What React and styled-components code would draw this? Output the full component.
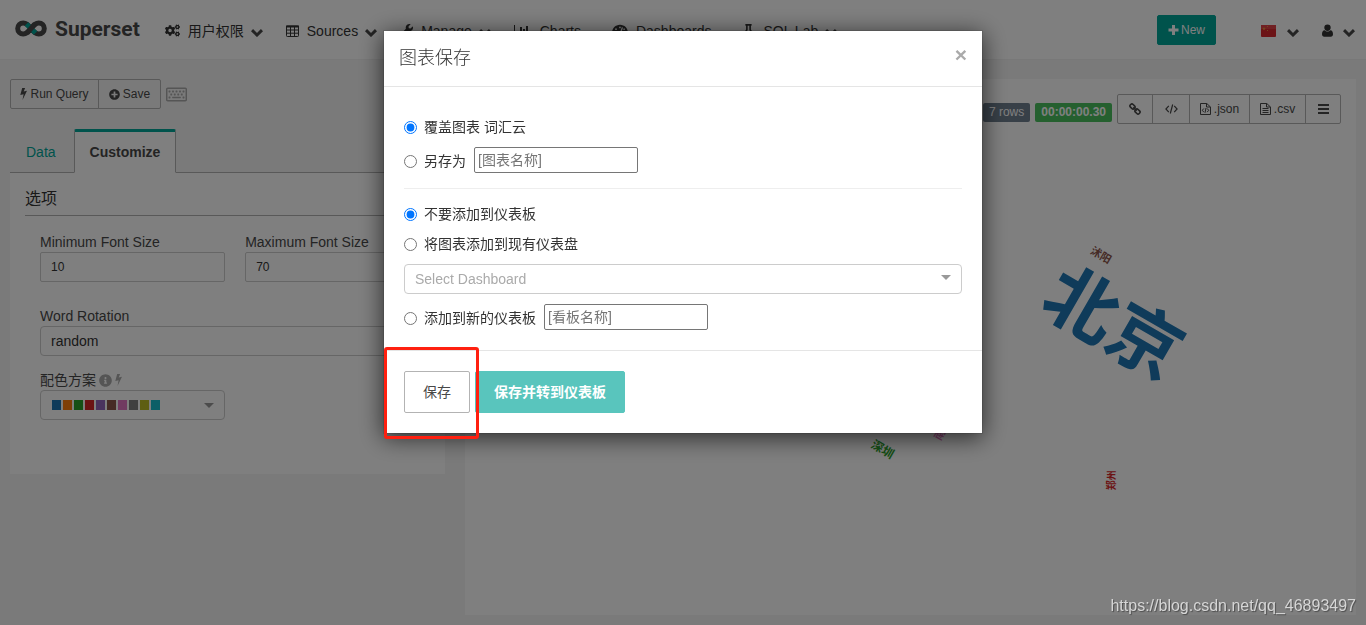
import React from 'react';
import styled, { createGlobalStyle, css } from 'styled-components';
import {
  FaCogs, FaWrench, FaTachometerAlt, FaFlask, FaPlusCircle, FaRegKeyboard, FaInfoCircle,
} from 'react-icons/fa';

const Global = createGlobalStyle`
  *, *::before, *::after { box-sizing: border-box; }
  body {
    margin: 0;
    background: #f5f5f5;
    color: #333;
    font: 14px/20px "Liberation Sans", Arial, "Noto Sans CJK SC", sans-serif;
  }
  button, input, select { font: inherit; color: inherit; }
  button { cursor: pointer; }
`;

const Page = styled.div`
  min-height: 100vh;
  display: flex;
  flex-direction: column;
`;

const Navbar = styled.header`
  display: flex;
  align-items: center;
  justify-content: space-between;
  height: 60px;
  padding: 0 11px 0 15px;
  background: #fff;
  border-bottom: 1px solid #f0f0f0;
`;

const NavGroup = styled.nav`
  display: flex;
  align-items: center;
`;

const Brand = styled.a`
  display: flex;
  align-items: center;
  gap: 8px;
  margin-right: 25px;
  padding-bottom: 2px;
  color: #484848;
  font: 700 21px/24px Roboto, sans-serif;
  text-decoration: none;
`;

const NavLink = styled.a`
  display: flex;
  align-items: center;
  height: 60px;
  padding-top: 2px;
  margin-right: ${(p) => (p.$menu ? 23 : 31)}px;
  color: #333;
  white-space: nowrap;
  text-decoration: none;
  > span { margin: 0 7px 0 8px; }
  > span:last-child { margin-right: 0; }
  > svg:last-child { margin-top: 4px; }
`;

const Tools = styled.div`
  display: flex;
  align-items: center;
`;

const NewButton = styled.button`
  display: flex;
  align-items: center;
  gap: 2px;
  height: 30px;
  padding: 0 10px;
  margin-right: 45px;
  border: 1px solid #00a699;
  border-radius: 2px;
  background: #00a699;
  color: #fff;
  font-size: 12px;
`;

const ToolLink = styled.a`
  display: flex;
  align-items: center;
  gap: ${(p) => p.$gap}px;
  padding-top: 2px;
  & + & { margin-left: 23px; }
  color: #333;
  > svg:last-child { margin-top: 4px; }
`;

const Main = styled.main`
  flex: 1;
  display: grid;
  grid-template-columns: 1fr 2fr;
  padding: 19px 0 10px;
`;

const Column = styled.section`
  display: flex;
  flex-direction: column;
  min-width: 0;
  padding: 0 10px;
`;

const ButtonBar = styled.div`
  display: flex;
  align-items: center;
`;

const SmallButton = styled.button`
  display: flex;
  align-items: center;
  justify-content: center;
  gap: 3px;
  height: 30px;
  min-width: ${(p) => p.$min || 0}px;
  padding: 0 9px;
  margin: 0 0 0 -1px;
  border: 1px solid #b3b3b3;
  background: transparent;
  color: #484848;
  font-size: 12px;
  &:first-of-type { margin-left: 0; border-radius: 2px 0 0 2px; }
  &:last-of-type { border-radius: 0 2px 2px 0; }
`;

const KeyboardIcon = styled(FaRegKeyboard)`
  margin-left: 5px;
  color: #aaa;
`;

const Tabs = styled.div`
  display: flex;
  gap: 2px;
  margin-top: 20px;
  border-bottom: 1px solid #b3b3b3;
`;

const Tab = styled.button`
  height: 44px;
  margin-bottom: -1px;
  padding: 1px 15px 0;
  border: 1px solid transparent;
  background: none;
  color: #00a699;
  ${(p) => p.$active && css`
    padding-top: 0;
    border: 1px solid #b3b3b3;
    border-top: 3px solid #00a699;
    border-bottom-color: #fff;
    border-radius: 2px 2px 0 0;
    background: #fff;
    color: #484848;
    font-weight: 700;
  `}
`;

const Panel = styled.div`
  padding: 15px 15px 54px;
  background: #fff;
`;

const PanelTitle = styled.h2`
  margin: 0 0 16px;
  padding-bottom: 6px;
  border-bottom: 1px solid #b3b3b3;
  font-size: 16px;
  line-height: 21px;
  font-weight: 400;
`;

const Fields = styled.div`
  display: grid;
  grid-template-columns: 1fr 1fr;
  column-gap: 20px;
  padding-left: 15px;
`;

const Field = styled.div`
  display: flex;
  flex-direction: column;
  grid-column: ${(p) => (p.$wide ? '1 / -1' : 'auto')};
  margin-bottom: ${(p) => p.$after || 0}px;
  > label { display: flex; align-items: center; gap: 3px; color: #484848; }
  > label svg { color: #aaa; }
`;

const TextBox = styled.input`
  width: 100%;
  height: 30px;
  padding: 0 10px;
  border: 1px solid #ccc;
  border-radius: 2px;
  background: #fff;
  font-size: 12px;
`;

const SelectBox = styled.select`
  appearance: none;
  width: 100%;
  height: 30px;
  padding: 0 10px;
  border: 1px solid #ccc;
  border-radius: 4px;
  background: #fff;
  color: ${(p) => (p.$empty ? '#aaa' : '#333')};
`;

const SchemeButton = styled.button`
  display: flex;
  align-items: center;
  gap: 2px;
  height: 30px;
  padding: 0 10px 0 11px;
  border: 1px solid #ccc;
  border-radius: 4px;
  background: #fff;
  > svg { margin-left: auto; }
`;

const Swatch = styled.span`
  width: 9px;
  height: 10px;
  background: ${(p) => p.$color};
`;

const ChartCard = styled.div`
  flex: 1;
  display: flex;
  flex-direction: column;
  padding: 15px;
  background: #fff;
`;

const ChartHeader = styled.div`
  display: flex;
  justify-content: flex-end;
  align-items: center;
  gap: 5px;
`;

const Badge = styled.span`
  margin-top: 6px;
  padding: 0 6px;
  border-radius: 2px;
  background: ${(p) => p.$bg};
  color: #fff;
  font-size: 12px;
  line-height: 19px;
  font-weight: ${(p) => (p.$bold ? 700 : 400)};
`;

const Cloud = styled.svg`
  flex: 1;
  width: 100%;
  min-height: 400px;
  font-family: "Noto Sans CJK SC", sans-serif;
  font-weight: 700;
`;

const Overlay = styled.div`
  position: fixed;
  inset: 0;
  padding: 30px 10px;
  background: rgba(0, 0, 0, 0.5);
`;

const Modal = styled.form`
  max-width: 600px;
  margin: 0 auto;
  border: 1px solid rgba(0, 0, 0, 0.1);
  background: #fff;
  background-clip: padding-box;
  box-shadow: 0 4px 22px rgba(0, 0, 0, 0.65);
`;

const ModalHeader = styled.div`
  display: flex;
  justify-content: space-between;
  align-items: flex-start;
  height: 56px;
  padding: 14px 15px;
  border-bottom: 1px solid #e5e5e5;
`;

const ModalTitle = styled.h1`
  margin: 0;
  font-size: 18px;
  line-height: 27px;
  font-weight: 300;
`;

const CloseButton = styled.button`
  padding: 0;
  border: 0;
  background: none;
  color: #aaa;
  font-size: 21px;
  line-height: 20px;
  font-weight: 700;
`;

const ModalBody = styled.div`
  display: flex;
  flex-direction: column;
  padding: 30px 20px 20px;
`;

const Option = styled.div`
  display: flex;
  align-items: center;
  height: ${(p) => (p.$input ? 26 : 20)}px;
  margin-bottom: ${(p) => p.$after || 0}px;
  > label {
    display: flex;
    align-items: center;
    padding-top: ${(p) => (p.$input ? 2 : 0)}px;
  }
`;

const Radio = styled.input`
  width: 13px;
  height: 13px;
  margin: 1px 7px 0 0;
  accent-color: #0075ff;
`;

const NameBox = styled.input`
  width: 164px;
  height: 26px;
  margin-left: 8px;
  padding: 1px 3px;
  border: 1px solid #767676;
  border-radius: 2px;
  background: #fff;
  &::placeholder { color: #757575; }
`;

const Divider = styled.hr`
  width: 100%;
  margin: 15px 0;
  border: 0;
  border-top: 1px solid #eee;
`;

const DashboardSelect = styled.div`
  position: relative;
  display: flex;
  margin-bottom: 10px;
  > svg { position: absolute; right: 11px; top: 11px; pointer-events: none; }
`;

const ModalFooter = styled.div`
  display: flex;
  gap: 5px;
  padding: 20px;
  border-top: 1px solid #e5e5e5;
`;

const Marked = styled.div`
  position: relative;
  z-index: 1;
  &::after {
    content: "";
    position: absolute;
    inset: -24px -9px -26px -20px;
    border: 3px solid #ff2010;
    border-radius: 3px;
    pointer-events: none;
  }
`;

const ModalButton = styled.button`
  height: 42px;
  padding: 0 18px;
  border: 1px solid ${(p) => (p.$primary ? '#59c5bd' : '#b3b3b3')};
  border-radius: 2px;
  background: ${(p) => (p.$primary ? '#59c5bd' : '#fff')};
  color: ${(p) => (p.$primary ? '#fff' : '#484848')};
  font-weight: ${(p) => (p.$primary ? 700 : 400)};
`;

const Watermark = styled.div`
  position: fixed;
  right: 10px;
  bottom: 9px;
  color: #d6d6d6;
  font-size: 16px;
  line-height: 20px;
  text-shadow: 1px 1px 1px rgba(0, 0, 0, 0.4);
`;

const Chevron = () => (
  <svg width="12" height="8" viewBox="0 0 12 8" fill="none" stroke="#484848" strokeWidth="3" aria-hidden="true">
    <path d="M1 1.2l5 4.8 5-4.8" />
  </svg>
);

const Caret = () => (
  <svg width="10" height="5" viewBox="0 0 10 5" fill="#999" aria-hidden="true">
    <path d="M0 0h10L5 5z" />
  </svg>
);

const Logo = () => (
  <svg width="32" height="17" viewBox="0 0 32 17" fill="none" strokeWidth="5" aria-hidden="true">
    <path d="M16 8.500C13 5 11.500 3 8.200 3a5.500 5.500 0 0 0 0 11C11.500 14 13 12 16 8.500S20.500 3 23.800 3a5.500 5.500 0 0 1 0 11C20.500 14 19 12 16 8.500z" stroke="#484848" />
    <path d="M11.500 4L20.500 13" stroke="#00a699" />
    <path d="M12 13l8-9" stroke="#484848" />
  </svg>
);

const TableIcon = () => (
  <svg width="13" height="12" viewBox="0 0 13 12" fill="none" stroke="#333" aria-hidden="true">
    <rect x="0.5" y="1" width="12" height="10.500" rx="0.800" />
    <path d="M0 1.500h13" strokeWidth="2" />
    <path d="M.5 5h12M.5 8.200h12M4.500 2v9.500M8.500 2v9.500" />
  </svg>
);

const BarChart = () => (
  <svg width="18" height="14" viewBox="0 0 18 14" fill="#333" aria-hidden="true">
    <path d="M0 1h1v11h15v1H0zM3 7h2v4H3zM6 3h2v8H6zM9 5h2v6H9zM12 2h2v9h-2z" />
  </svg>
);

const Plus = () => (
  <svg width="11" height="10" viewBox="0 0 11 10" fill="none" stroke="#fff" strokeWidth="3" aria-hidden="true">
    <path d="M5.500 0v10M.5 5h10" />
  </svg>
);

const Bolt = ({ size = 12 }) => (
  <svg width={size * 7 / 12} height={size} viewBox="0 0 7 12" fill="currentColor" aria-hidden="true">
    <path d="M2.200 0h2.900L3.700 3.500 7 2.800 2.500 12l1.100-5.700L.3 7z" />
  </svg>
);

const UserIcon = () => (
  <svg width="11" height="13" viewBox="0 0 11 13" fill="#333" aria-hidden="true">
    <path d="M5.500 0.500a3.200 3.200 0 0 1 3.200 3.200c0 1.800-1.400 3.400-3.200 3.400S2.300 5.500 2.300 3.700A3.200 3.200 0 0 1 5.500.5zM2.700 6.300c.8.900 1.700 1.300 2.800 1.300s2-.4 2.800-1.300C10.300 6.300 11 8.400 11 10.300c0 1.500-.9 2.400-2.200 2.400H2.200C.9 12.700 0 11.800 0 10.300 0 8.400.7 6.300 2.700 6.300z" />
  </svg>
);

const LinkIcon = () => (
  <svg width="12" height="12" viewBox="0 0 12 12" fill="none" stroke="#484848" strokeWidth="1.600" aria-hidden="true">
    <rect x="-2.700" y="-1.900" width="5.400" height="3.800" rx="1.700" transform="translate(3.500 3.500) rotate(45)" />
    <rect x="-2.700" y="-1.900" width="5.400" height="3.800" rx="1.700" transform="translate(8.500 8.500) rotate(45)" />
    <path d="M4.300 4.300l3.400 3.400" />
  </svg>
);

const CodeIcon = () => (
  <svg width="13" height="10" viewBox="0 0 13 10" fill="none" stroke="#484848" strokeWidth="1.200" aria-hidden="true">
    <path d="M3.800 1.800L.9 5l2.900 3.200M9.200 1.800L12.100 5 9.200 8.200M7.700.5L5.300 9.500" />
  </svg>
);

const FileIcon = ({ code }) => (
  <svg width="11" height="12" viewBox="0 0 11 12" fill="none" stroke="#484848" aria-hidden="true">
    <path d="M.5.5h6.300l3.700 3.500v7.500H.5zM6.500.5V4h4" />
    {code
      ? <path d="M3.800 5.500L2.300 7.300l1.500 1.800M7.200 5.500l1.500 1.800-1.500 1.800M6 5L5 9.800" />
      : <path d="M2.500 5.500h6M2.500 7.500h6M2.500 9.500h6" />}
  </svg>
);

const BarsIcon = () => (
  <svg width="11" height="10" viewBox="0 0 11 10" fill="#484848" aria-hidden="true">
    <path d="M0 0h11v2H0zM0 4h11v2H0zM0 8h11v2H0z" />
  </svg>
);

const Flag = () => (
  <svg width="15" height="12" viewBox="0 0 15 12" aria-hidden="true">
    <rect width="15" height="12" rx="1" fill="#d9282f" />
    <path d="M0 0h15v4H0z" fill="#e04046" />
    <path d="M3 2l.5 1.100 1.200.1-.9.8.3 1.200L3 4.500l-1.100.7.300-1.200-.9-.8 1.200-.1z" fill="#e8913b" />
    <path d="M6 1h1v1H6zM6 5h1v1H6z" fill="#e8913b" />
  </svg>
);

const NAV = [
  { text: '用户权限', icon: <FaCogs size={15} />, menu: true },
  { text: 'Sources', icon: <TableIcon />, menu: true },
  { text: 'Manage', icon: <FaWrench size={13} />, menu: true },
  { text: 'Charts', icon: <BarChart /> },
  { text: 'Dashboards', icon: <FaTachometerAlt size={16} /> },
  { text: 'SQL Lab', icon: <FaFlask size={13} />, menu: true },
];

const SCHEME = ['#1f77b4', '#ff7f0e', '#2ca02c', '#d62728', '#9467bd', '#8c564b', '#e377c2', '#7f7f7f', '#bcbd22', '#17becf'];

const WORDS = [
  { text: '北京', size: 73, x: 206, y: -6, rotate: 30, color: '#1f77b4' },
  { text: '沭阳', size: 11, x: 191, y: -70, rotate: 30, color: '#8c564b' },
  { text: '深圳', size: 12, x: -27, y: 124, rotate: 30, color: '#2ca02c' },
  { text: '南京', size: 11, x: 31, y: 105, rotate: -60, color: '#e377c2' },
  { text: '郑州', size: 10, x: 200, y: 156, rotate: -90, color: '#d62728' },
];

export default function App() {
  return (
    <>
      <Global />
      <Page>
        <Navbar>
          <NavGroup>
            <Brand href="#"><Logo />Superset</Brand>
            {NAV.map((item) => (
              <NavLink key={item.text} href="#" $menu={item.menu}>
                {item.icon}
                <span>{item.text}</span>
                {item.menu && <Chevron />}
              </NavLink>
            ))}
          </NavGroup>
          <Tools>
            <NewButton type="button"><Plus />New</NewButton>
            <ToolLink href="#" $gap={11} aria-label="Language"><Flag /><Chevron /></ToolLink>
            <ToolLink href="#" $gap={10} aria-label="User"><UserIcon /><Chevron /></ToolLink>
          </Tools>
        </Navbar>

        <Main>
          <Column>
            <ButtonBar>
              <SmallButton type="button" $min={89}><Bolt size={12} />Run Query</SmallButton>
              <SmallButton type="button" $min={63}><FaPlusCircle size={11} />Save</SmallButton>
              <KeyboardIcon size={21} />
            </ButtonBar>
            <Tabs role="tablist">
              <Tab type="button" role="tab">Data</Tab>
              <Tab type="button" role="tab" aria-selected="true" $active>Customize</Tab>
            </Tabs>
            <Panel>
              <PanelTitle>选项</PanelTitle>
              <Fields>
                <Field $after={24}>
                  <label htmlFor="min-size">Minimum Font Size</label>
                  <TextBox id="min-size" defaultValue="10" />
                </Field>
                <Field $after={24}>
                  <label htmlFor="max-size">Maximum Font Size</label>
                  <TextBox id="max-size" defaultValue="70" />
                </Field>
                <Field $wide $after={14}>
                  <label htmlFor="rotation">Word Rotation</label>
                  <SelectBox id="rotation" defaultValue="random">
                    <option>random</option>
                  </SelectBox>
                </Field>
                <Field>
                  <label htmlFor="scheme">配色方案 <FaInfoCircle size={13} /><Bolt size={12} /></label>
                  <SchemeButton type="button" id="scheme">
                    {SCHEME.map((c) => <Swatch key={c} $color={c} />)}
                    <Caret />
                  </SchemeButton>
                </Field>
              </Fields>
            </Panel>
          </Column>

          <Column>
            <ChartCard>
              <ChartHeader>
                <Badge $bg="#708090">7 rows</Badge>
                <Badge $bg="#4ac15f" $bold>00:00:00.30</Badge>
                <ButtonBar>
                  <SmallButton type="button" $min={36} aria-label="Link"><LinkIcon /></SmallButton>
                  <SmallButton type="button" $min={38} aria-label="Embed"><CodeIcon /></SmallButton>
                  <SmallButton type="button" $min={61}><FileIcon code />.json</SmallButton>
                  <SmallButton type="button" $min={57}><FileIcon />.csv</SmallButton>
                  <SmallButton type="button" $min={36} aria-label="Menu"><BarsIcon /></SmallButton>
                </ButtonBar>
              </ChartHeader>
              <Cloud viewBox="-430 -200 860 476">
                {WORDS.map((w) => (
                  <text
                    key={w.text}
                    transform={`translate(${w.x} ${w.y}) rotate(${w.rotate})`}
                    fontSize={w.size}
                    fill={w.color}
                    textAnchor="middle"
                    dominantBaseline="central"
                  >
                    {w.text}
                  </text>
                ))}
              </Cloud>
            </ChartCard>
          </Column>
        </Main>
      </Page>

      <Overlay>
        <Modal role="dialog" aria-labelledby="modal-title" onSubmit={(e) => e.preventDefault()}>
          <ModalHeader>
            <ModalTitle id="modal-title">图表保存</ModalTitle>
            <CloseButton type="button" aria-label="Close">×</CloseButton>
          </ModalHeader>
          <ModalBody>
            <Option $after={10}>
              <label><Radio type="radio" name="chart" defaultChecked />覆盖图表 词汇云</label>
            </Option>
            <Option $input>
              <label><Radio type="radio" name="chart" />另存为</label>
              <NameBox placeholder="[图表名称]" aria-label="图表名称" />
            </Option>
            <Divider />
            <Option $after={10}>
              <label><Radio type="radio" name="dash" defaultChecked />不要添加到仪表板</label>
            </Option>
            <Option $after={10}>
              <label><Radio type="radio" name="dash" />将图表添加到现有仪表盘</label>
            </Option>
            <DashboardSelect>
              <SelectBox $empty defaultValue="" aria-label="Select Dashboard">
                <option value="">Select Dashboard</option>
              </SelectBox>
              <Caret />
            </DashboardSelect>
            <Option $input>
              <label><Radio type="radio" name="dash" />添加到新的仪表板</label>
              <NameBox placeholder="[看板名称]" aria-label="看板名称" />
            </Option>
          </ModalBody>
          <ModalFooter>
            <Marked><ModalButton type="submit">保存</ModalButton></Marked>
            <ModalButton type="button" $primary>保存并转到仪表板</ModalButton>
          </ModalFooter>
        </Modal>
      </Overlay>
      <Watermark>https://blog.csdn.net/qq_46893497</Watermark>
    </>
  );
}
